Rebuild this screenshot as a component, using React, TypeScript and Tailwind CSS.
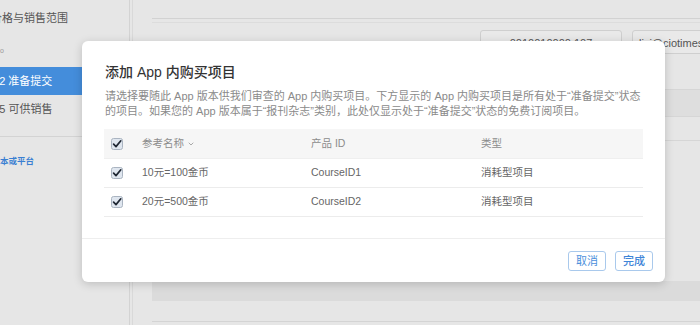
import { ChevronDown } from "lucide-react";

const rows = [
  { name: "10元=100金币", id: "CourseID1", type: "消耗型项目" },
  { name: "20元=500金币", id: "CourseID2", type: "消耗型项目" },
];

function Check() {
  return (
    <svg width="12" height="12" viewBox="0 0 12 12" className="block">
      <rect x="0.5" y="0.5" width="11" height="11" rx="2" fill="#dfe6ef" stroke="#aab4c1" />
      <path d="M2.6 6.1 L5 8.6 L9.8 2.8" fill="none" stroke="#1f2733" strokeWidth="1.7" strokeLinecap="round" strokeLinejoin="round" />
    </svg>
  );
}

export default function App() {
  return (
    <div className="relative h-[325px] w-[700px] overflow-hidden bg-[#e6e6e6] font-['Liberation_Sans','Noto_Sans_CJK_SC',sans-serif]">
      {/* page behind the dialog */}
      <div className="flex h-full">
        <aside className="w-[130px] shrink-0 border-r border-[#d3d3d3] text-[11px] text-[#555]">
          <div className="flex h-[36px] items-center">
            <span className="-ml-[9px] whitespace-nowrap">价格与销售范围</span>
          </div>
          <div className="flex h-[31px] items-center text-[7px] text-[#999]">o</div>
          <div className="flex h-[28px] items-center bg-[#448ddb] text-white">
            <span className="-ml-[10px] whitespace-nowrap">1.2 准备提交</span>
          </div>
          <div className="flex h-[29px] items-center">
            <span className="-ml-[19px] whitespace-nowrap">1.1.5 可供销售</span>
          </div>
          <div className="mt-[12px] flex h-[50px] items-center border-t border-[#d3d3d3] text-[8.5px] font-bold text-[#3a7fd2]">
            本或平台
          </div>
        </aside>
        <main className="ml-[2px] flex flex-1 flex-col border-l border-[#d9d9d9]">
          <div className="ml-[19px] h-[19px] border-b border-[#d2d2d2]" />
          <div className="ml-[19px] h-[4px] border-b border-[#dcdcdc]" />
          <div className="mt-[7px] flex gap-[10px] pl-[347px] text-[11px] text-[#555]">
            <div className="h-[24px] w-[142px] rounded-[3px] border border-[#cfcfcf] bg-[#e9e9e9] pt-[4px] text-center">
              0010010000 107
            </div>
            <div className="h-[24px] w-[200px] rounded-[3px] border border-[#cfcfcf] bg-[#e9e9e9] pl-[6px] pt-[4px] whitespace-nowrap">
              lixi@ciotimes.com
            </div>
          </div>
          <div className="ml-[19px] mt-[35px] h-[28px] border-y border-[#d6d6d6] bg-[#dedede]" />
          <div className="ml-[19px] h-[24px] border-b border-[#d6d6d6]" />
          <div className="ml-[19px] mt-[140px] h-[20px] bg-[#dbdbdb]" />
          <div className="ml-[19px] h-[21px] border-b border-[#d4d4d4]" />
        </main>
      </div>

      {/* dialog */}
      <div className="absolute left-[82px] top-[41px] flex h-[241px] w-[583px] flex-col rounded-[6px] bg-white shadow-[0_2px_10px_rgba(0,0,0,0.18)]">
        <div className="px-[22px] pt-[21px]">
          <h2 className="pl-[1px] text-[14px] leading-[20px] font-medium text-[#333]">添加 App 内购买项目</h2>
          <p className="mt-[7px] pl-[1px] text-[11px] leading-[15px] whitespace-nowrap text-[#8a8a8a]">
            请选择要随此 App 版本供我们审查的 App 内购买项目。下方显示的 App 内购买项目是所有处于“准备提交”状态
            <br />
            的项目。如果您的 App 版本属于“报刊杂志”类别，此处仅显示处于“准备提交”状态的免费订阅项目。
          </p>

          <div className="mt-[10px] text-[10.5px]">
            <div className="grid h-[30px] grid-cols-[38px_169px_170px_1fr] items-center border-b border-[#efefef] bg-[#f6f6f6] text-[#8c8c8c]">
              <div className="pl-[7px]">
                <Check />
              </div>
              <div className="flex items-center gap-[3px]">
                参考名称
                <ChevronDown size={8} strokeWidth={2.5} className="text-[#999]" />
              </div>
              <div>产品 ID</div>
              <div>类型</div>
            </div>
            {rows.map((r) => (
              <div
                key={r.id}
                className="grid h-[29px] grid-cols-[38px_169px_170px_1fr] items-center border-b border-[#ececec] text-[#666]"
              >
                <div className="pl-[7px]">
                  <Check />
                </div>
                <div>{r.name}</div>
                <div>{r.id}</div>
                <div>{r.type}</div>
              </div>
            ))}
          </div>
        </div>

        <div className="mt-[21px] flex justify-end gap-[9px] border-t border-[#eeeeee] pr-[12px] pt-[12px]">
          <button className="h-[20px] w-[38px] rounded-[3px] border border-[#a9c9ec] text-[11px] text-[#4a8fdc]">
            取消
          </button>
          <button className="h-[20px] w-[38px] rounded-[3px] border border-[#a9c9ec] text-[11px] font-medium text-[#3f86d8]">
            完成
          </button>
        </div>
      </div>
    </div>
  );
}
